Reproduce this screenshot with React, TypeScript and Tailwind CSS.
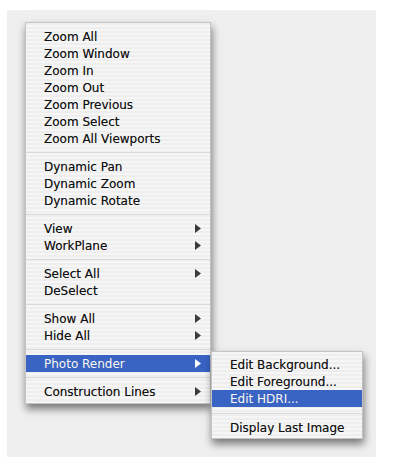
import React from "react";

type Item = { label: string; arrow?: boolean; active?: boolean } | "sep";

const items: Item[] = [
  { label: "Zoom All" },
  { label: "Zoom Window" },
  { label: "Zoom In" },
  { label: "Zoom Out" },
  { label: "Zoom Previous" },
  { label: "Zoom Select" },
  { label: "Zoom All Viewports" },
  "sep",
  { label: "Dynamic Pan" },
  { label: "Dynamic Zoom" },
  { label: "Dynamic Rotate" },
  "sep",
  { label: "View", arrow: true },
  { label: "WorkPlane", arrow: true },
  "sep",
  { label: "Select All", arrow: true },
  { label: "DeSelect" },
  "sep",
  { label: "Show All", arrow: true },
  { label: "Hide All", arrow: true },
  "sep",
  { label: "Photo Render", arrow: true, active: true },
  "sep",
  { label: "Construction Lines", arrow: true },
];

const subItems: Item[] = [
  { label: "Edit Background..." },
  { label: "Edit Foreground..." },
  { label: "Edit HDRI...", active: true },
  "sep",
  { label: "Display Last Image" },
];

function Arrow({ white }: { white?: boolean }) {
  return (
    <svg width="6" height="9" viewBox="0 0 6 9" className="shrink-0">
      <polygon points="0,0 6,4.5 0,9" fill={white ? "#ffffff" : "#3a3a3a"} />
    </svg>
  );
}

const stripe =
  "bg-[repeating-linear-gradient(0deg,#f6f6f6_0px,#f6f6f6_2px,#eeeeee_2px,#eeeeee_4px)]";

function Sep() {
  return (
    <div className="h-[11px] flex items-center">
      <div className="h-px w-full bg-[#dadada]" />
    </div>
  );
}

export default function App() {
  return (
    <div
      className="w-[399px] h-[465px] bg-white pt-[10px] pl-[7px]"
      style={{ fontFamily: '"DejaVu Sans", sans-serif' }}
    >
      <div className="w-[369px] h-[447px] bg-[#efefef] pt-[12px] pl-[18px]">
        <div
          className={`relative w-[186px] pt-[5px] pb-[3px] border border-[#c4c4c4] ${stripe} shadow-[1px_5px_8px_rgba(0,0,0,0.5)] text-[12px] text-[#111111] [text-shadow:0_0_0.6px_rgba(0,0,0,0.45)]`}
        >
          {items.map((it, i) =>
            it === "sep" ? (
              <Sep key={i} />
            ) : (
              <div
                key={i}
                className={`relative h-[17px] flex items-center justify-between pl-[18px] pr-[9px] ${
                  it.active ? "bg-[#3a64c4] text-white" : ""
                }`}
              >
                <span className="leading-none">{it.label}</span>
                {it.arrow && <Arrow white={it.active} />}
                {it.active && (
                  <div
                    className={`absolute left-[185px] top-[-4px] w-[152px] pt-[4px] pb-[2px] border border-[#c4c4c4] ${stripe} shadow-[1px_5px_8px_rgba(0,0,0,0.5)] text-[#111111]`}
                  >
                    {subItems.map((s, j) =>
                      s === "sep" ? (
                        <div key={j} className="h-[12px] flex items-center">
                          <div className="h-px w-full bg-[#dadada]" />
                        </div>
                      ) : (
                        <div
                          key={j}
                          className={`h-[17px] flex items-center pl-[18px] ${
                            s.active ? "bg-[#3a64c4] text-white" : ""
                          }`}
                        >
                          <span className="leading-none">{s.label}</span>
                        </div>
                      )
                    )}
                  </div>
                )}
              </div>
            )
          )}
        </div>
      </div>
    </div>
  );
}
